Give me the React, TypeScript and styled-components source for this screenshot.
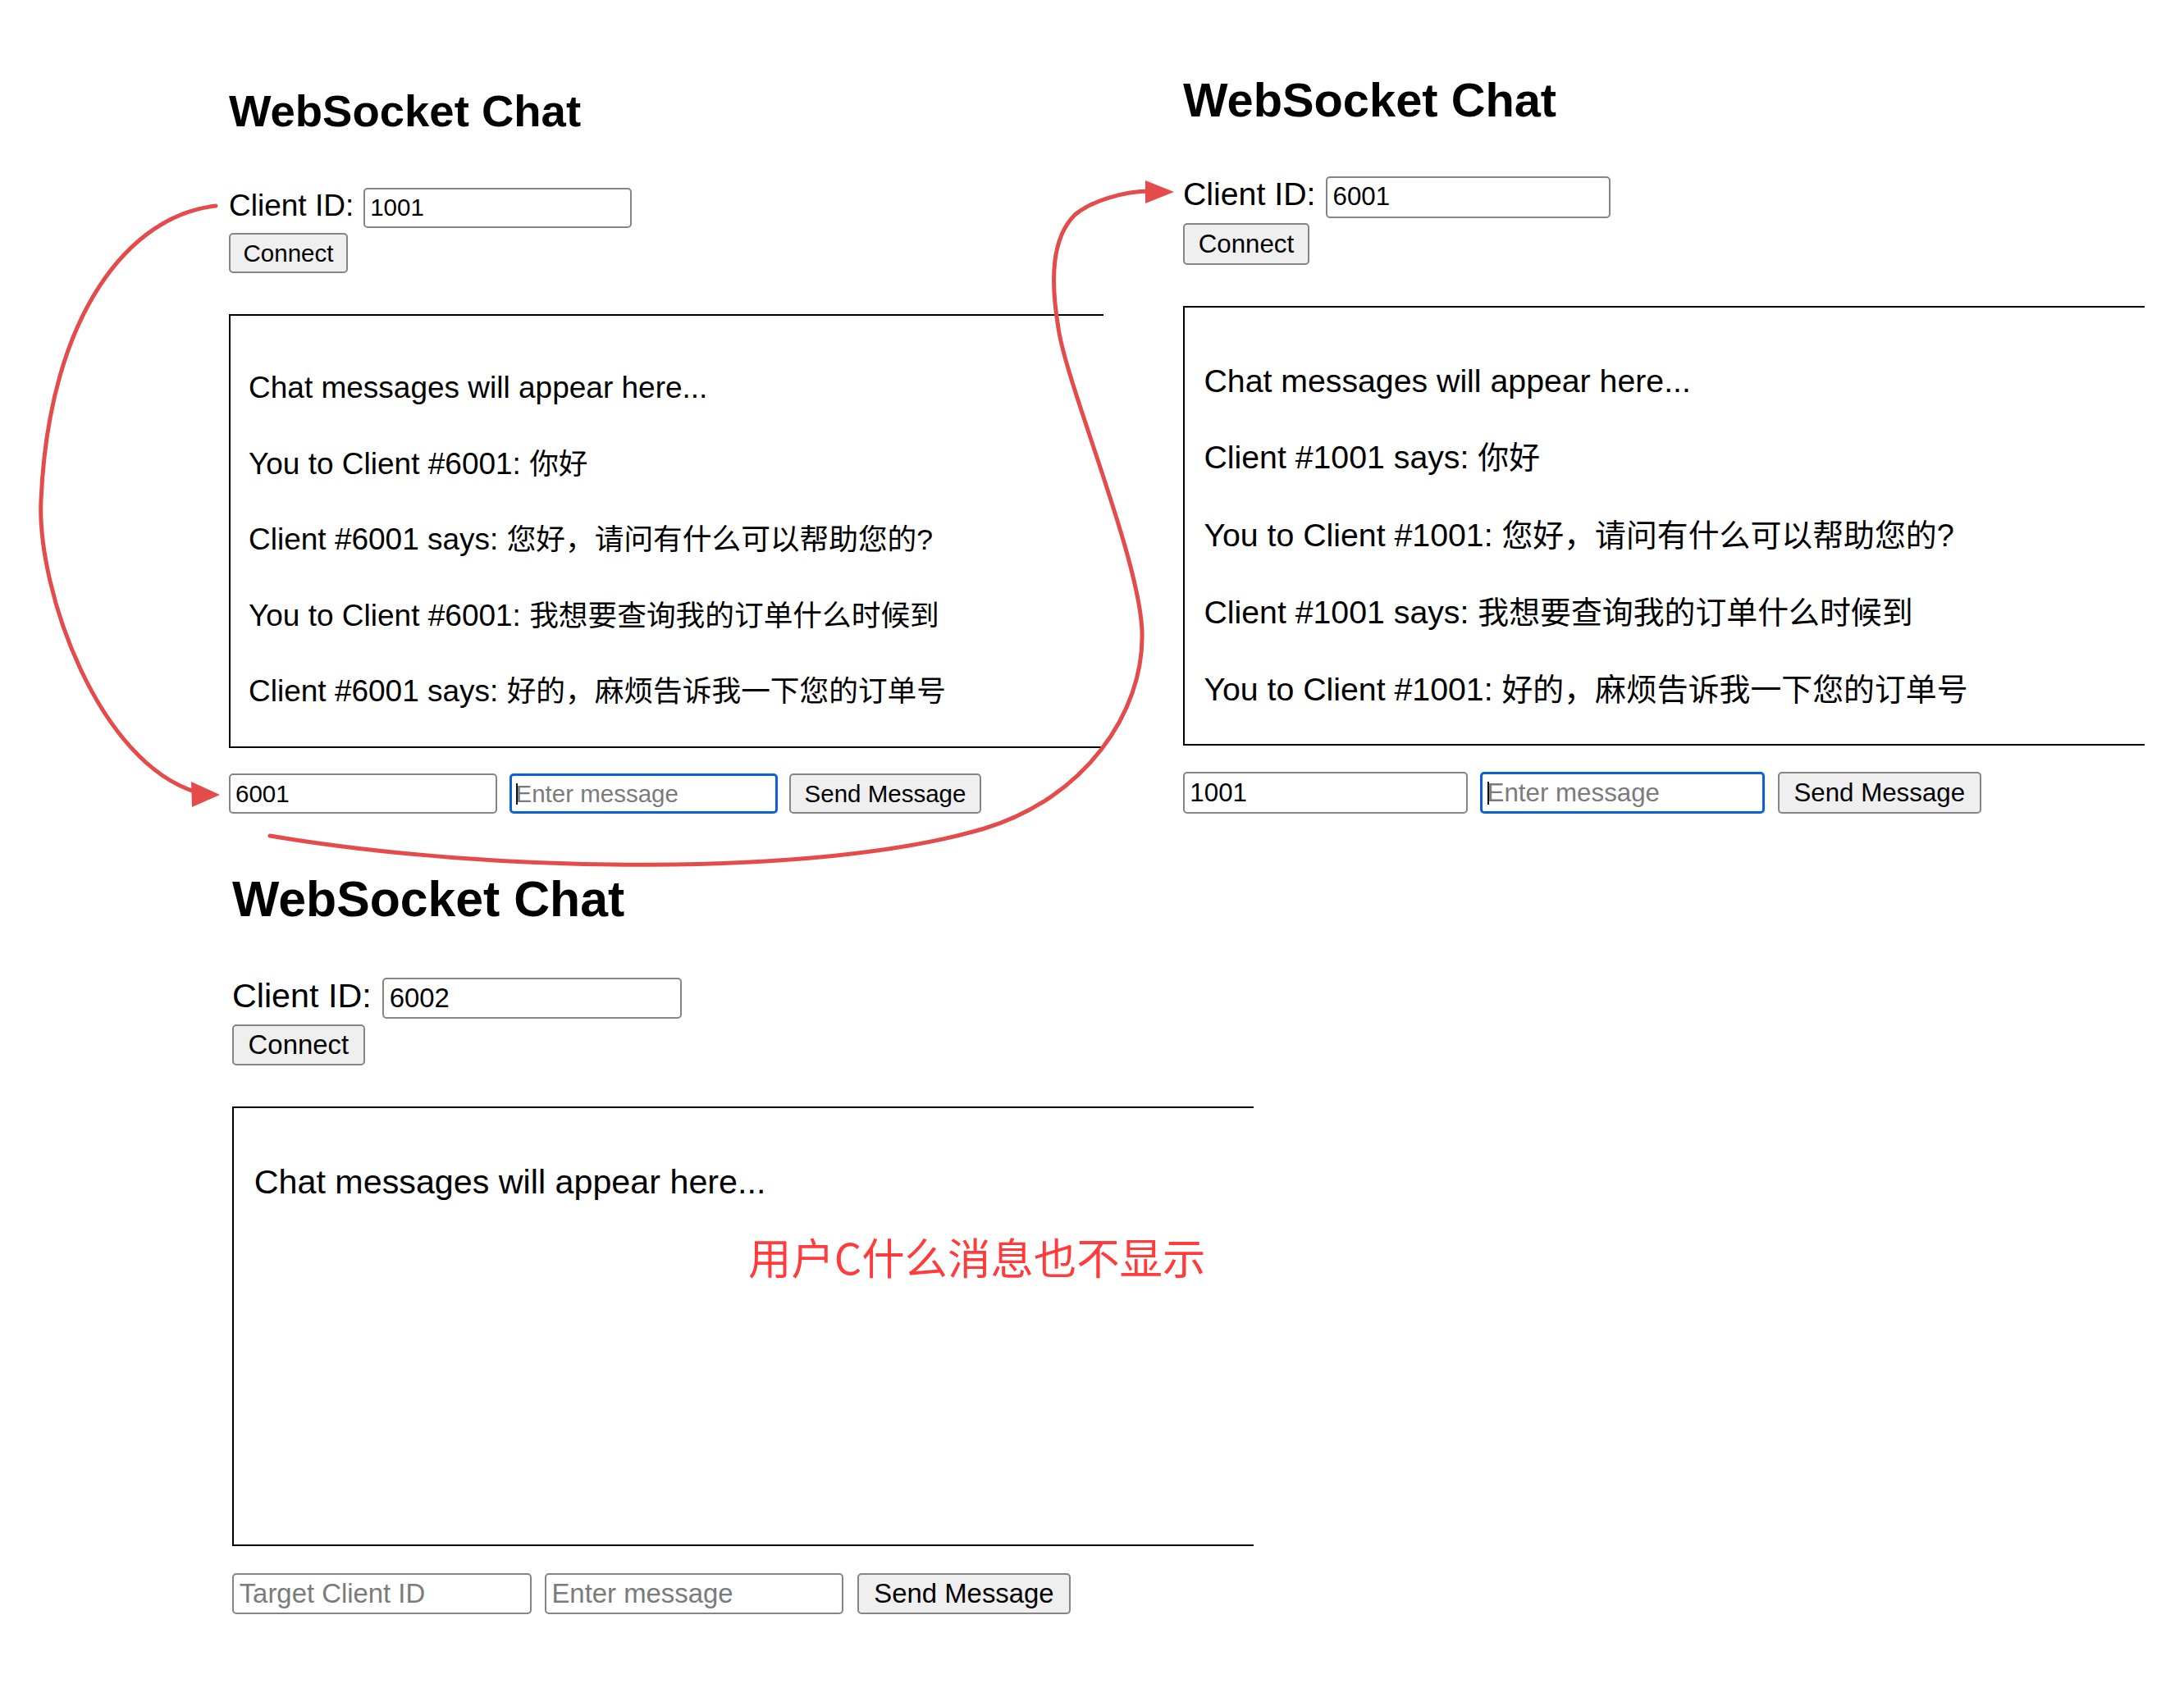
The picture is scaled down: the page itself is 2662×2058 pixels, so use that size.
import styled, { ThemeProvider, createGlobalStyle } from 'styled-components'

type PanelTheme = {
  k: number
  top: number
  headGap: number
  fieldH: number
  boxW: number
  boxH: number
  boxPad: number
  step: number
  rowGap: number
}

type ChatLine = {
  from: string
  text?: string
}

const GlobalStyle = createGlobalStyle`
  * {
    box-sizing: border-box;
  }
  html, body {
    margin: 0;
    padding: 0;
    background: #fff;
  }
  body {
    font-family: "Liberation Sans", Arial, "Noto Sans CJK SC", sans-serif;
    color: #000;
  }
`

const Page = styled.div`
  position: relative;
  width: 2662px;
  height: 2058px;
  overflow: hidden;
  background: #fff;
`

const TopRow = styled.div`
  display: flex;
  align-items: flex-start;
`

const Panel = styled.section<{ $left: number }>`
  flex: none;
  display: flex;
  flex-direction: column;
  align-items: flex-start;
  margin-left: ${({ $left }) => $left}px;
  padding-top: ${({ theme }) => theme.top}px;
  width: ${({ theme }) => theme.boxW}px;
`

const Title = styled.h2`
  margin: 0 0 ${({ theme }) => theme.headGap}px;
  height: 60px;
  line-height: 60px;
  font-size: ${({ theme }) => 54.5 * theme.k}px;
  font-weight: 700;
  white-space: nowrap;
`

const ClientRow = styled.div`
  display: flex;
  align-items: baseline;
  gap: ${({ theme }) => 12 * theme.k}px;
`

const Label = styled.label`
  font-size: ${({ theme }) => 37 * theme.k}px;
  white-space: nowrap;
`

const Field = styled.input<{ $focused?: boolean }>`
  width: ${({ theme }) => 327 * theme.k}px;
  height: ${({ theme }) => theme.fieldH}px;
  margin: 0;
  padding: 0 ${({ theme, $focused }) => ($focused ? 5 : 6) * theme.k}px;
  border: ${({ $focused }) => ($focused ? '3px solid #0b62d8' : '2px solid #858585')};
  border-radius: 5px;
  background: #fff;
  color: #000;
  font-family: inherit;
  font-size: ${({ theme }) => 29.5 * theme.k}px;
  outline: none;

  &::placeholder {
    color: #7b7b7b;
  }
`

const FocusWrap = styled.span`
  position: relative;
  display: inline-flex;

  &::after {
    content: '';
    position: absolute;
    left: ${({ theme }) => 8.5 * theme.k}px;
    top: 24%;
    height: 54%;
    width: 2px;
    background: #111;
  }
`

const Button = styled.button<{ $w: number }>`
  width: ${({ theme, $w }) => $w * theme.k}px;
  height: ${({ theme }) => theme.fieldH}px;
  margin: 0;
  padding: 0;
  border: 2px solid #858585;
  border-radius: 5px;
  background: #efefef;
  color: #000;
  font-family: inherit;
  font-size: ${({ theme }) => 29.5 * theme.k}px;
  white-space: nowrap;
`

const ConnectButton = styled(Button)`
  margin-top: 6.5px;
`

const ChatBox = styled.div`
  margin-top: 50px;
  width: ${({ theme }) => theme.boxW}px;
  height: ${({ theme }) => theme.boxH}px;
  padding: ${({ theme }) => theme.boxPad}px 0 0 ${({ theme }) => 24 * theme.k - 2}px;
  border: 2px solid #000;
  border-right: none;
`

const Message = styled.p`
  margin: 0;
  font-size: ${({ theme }) => 37 * theme.k}px;
  line-height: ${({ theme }) => theme.step}px;
  white-space: nowrap;
`

const MessageText = styled.span`
  font-size: 0.965em;
`

const SendRow = styled.div`
  display: flex;
  align-items: center;
  gap: ${({ theme }) => 14.5 * theme.k}px;
  margin-top: ${({ theme }) => theme.rowGap}px;
`

const Overlay = styled.svg`
  position: absolute;
  left: 0;
  top: 0;
  pointer-events: none;
`

const Note = styled.div`
  position: absolute;
  left: 912px;
  top: 1505px;
  font-family: "Noto Sans CJK SC", sans-serif;
  font-size: 52.4px;
  line-height: 52px;
  color: #ff3b3b;
  white-space: nowrap;
`

const themeA: PanelTheme = { k: 1, top: 106, headGap: 62.5, fieldH: 49, boxW: 1066, boxH: 529, boxPad: 42, step: 92.5, rowGap: 31 }
const themeB: PanelTheme = { k: 1.061, top: 92, headGap: 62, fieldH: 51, boxW: 1172, boxH: 536, boxPad: 42.8, step: 93.4, rowGap: 32 }
const themeC: PanelTheme = { k: 1.115, top: 74, headGap: 65, fieldH: 50, boxW: 1245, boxH: 536, boxPad: 44.5, step: 93, rowGap: 33 }

const placeholderLine: ChatLine = { from: 'Chat messages will appear here...' }

type ChatProps = {
  left: number
  clientId: string
  targetId?: string
  focused?: boolean
  messages: ChatLine[]
}

const ChatClient = ({ left, clientId, targetId, focused, messages }: ChatProps) => (
  <Panel $left={left}>
    <Title>WebSocket Chat</Title>
    <ClientRow>
      <Label>Client ID:</Label>
      <Field defaultValue={clientId} />
    </ClientRow>
    <ConnectButton $w={145}>Connect</ConnectButton>
    <ChatBox>
      {messages.map((m, i) => (
        <Message key={i}>
          {m.from}
          {m.text && (
            <>
              {' '}
              <MessageText>{m.text}</MessageText>
            </>
          )}
        </Message>
      ))}
    </ChatBox>
    <SendRow>
      <Field defaultValue={targetId} placeholder="Target Client ID" />
      {focused ? (
        <FocusWrap>
          <Field $focused placeholder="Enter message" />
        </FocusWrap>
      ) : (
        <Field placeholder="Enter message" />
      )}
      <Button $w={234}>Send Message</Button>
    </SendRow>
  </Panel>
)

const RED = '#e44c4c'

export default function App() {
  return (
    <Page>
      <GlobalStyle />
      <TopRow>
        <ThemeProvider theme={themeA}>
          <ChatClient
            left={279}
            clientId="1001"
            targetId="6001"
            focused
            messages={[
              placeholderLine,
              { from: 'You to Client #6001:', text: '你好' },
              { from: 'Client #6001 says:', text: '您好，请问有什么可以帮助您的?' },
              { from: 'You to Client #6001:', text: '我想要查询我的订单什么时候到' },
              { from: 'Client #6001 says:', text: '好的，麻烦告诉我一下您的订单号' },
            ]}
          />
        </ThemeProvider>
        <ThemeProvider theme={themeB}>
          <ChatClient
            left={97}
            clientId="6001"
            targetId="1001"
            focused
            messages={[
              placeholderLine,
              { from: 'Client #1001 says:', text: '你好' },
              { from: 'You to Client #1001:', text: '您好，请问有什么可以帮助您的?' },
              { from: 'Client #1001 says:', text: '我想要查询我的订单什么时候到' },
              { from: 'You to Client #1001:', text: '好的，麻烦告诉我一下您的订单号' },
            ]}
          />
        </ThemeProvider>
      </TopRow>
      <ThemeProvider theme={themeC}>
        <ChatClient left={283} clientId="6002" messages={[placeholderLine]} />
      </ThemeProvider>

      <Note>用户C什么消息也不显示</Note>

      <Overlay width={2662} height={2058} viewBox="0 0 2662 2058">
        <g fill="none" stroke={RED} strokeWidth={5} strokeLinecap="round">
          <path d="M263,251 C160,262 60,380 50,610 C45,720 120,930 240,966" />
          <path d="M329,1019 C600,1065 1000,1070 1200,1010 C1320,974 1395,870 1392,770 C1389,680 1300,470 1290,400 C1280,340 1282,290 1310,262 C1330,245 1370,233 1402,233" />
        </g>
        <g fill={RED}>
          <polygon points="268,969 233,953 234,984" />
          <polygon points="1431,234 1396,220 1396,248" />
        </g>
      </Overlay>
    </Page>
  )
}
